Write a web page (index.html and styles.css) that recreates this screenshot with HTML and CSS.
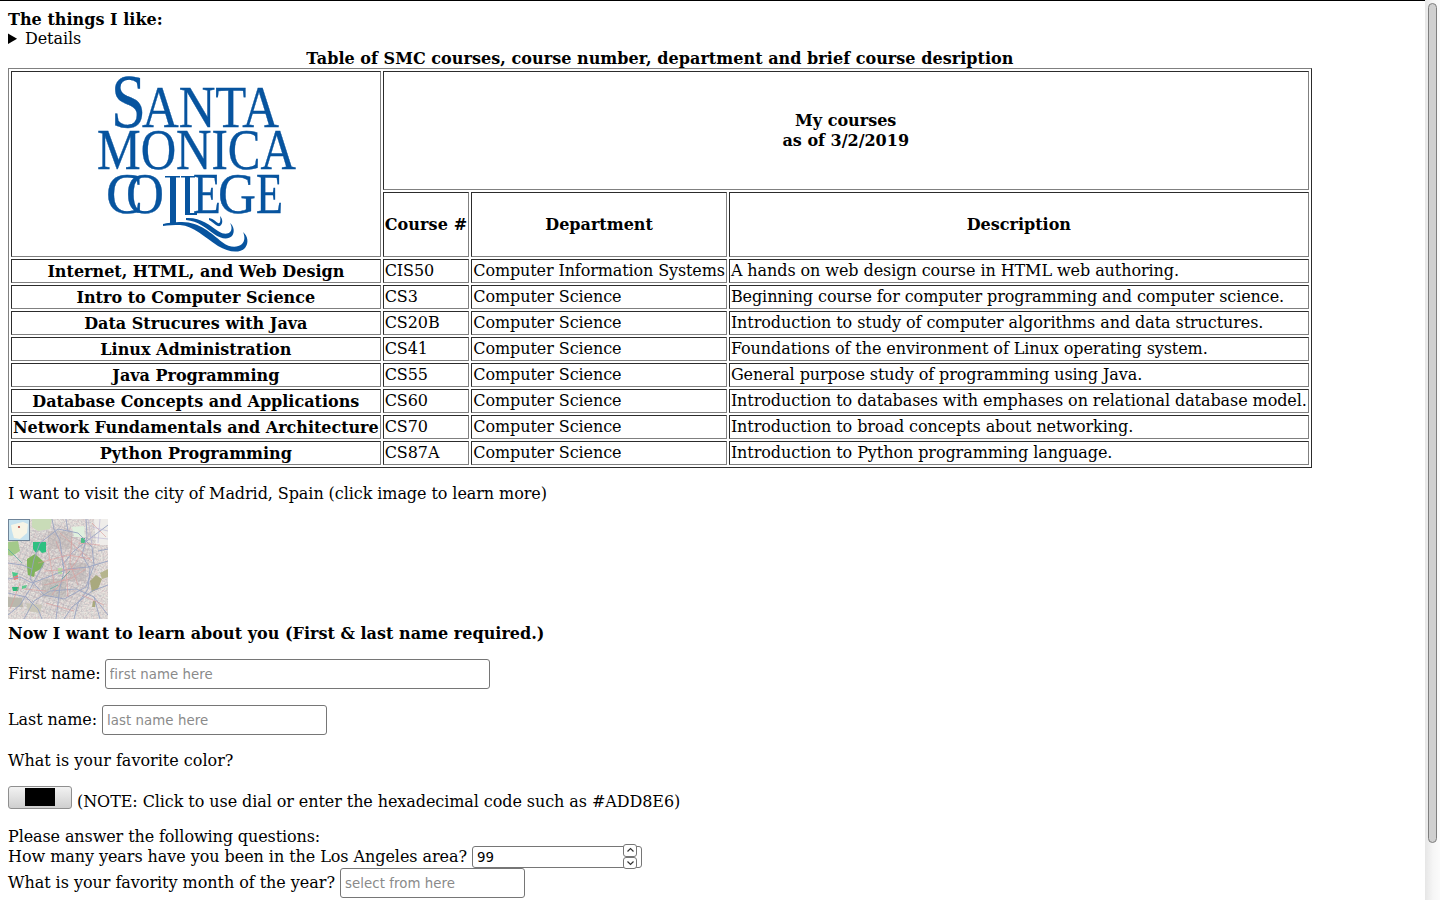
FILE: index.html
```html
<!DOCTYPE html>
<html lang="en">
<head>
<meta charset="utf-8">
<title>My courses</title>
<link rel="stylesheet" href="styles.css">
</head>
<body>
<div class="page">
  <div class="title"><strong>The things I like:</strong></div>
  <details><summary>Details</summary><p>Things</p></details>
  <table class="courses">
    <caption>Table of SMC courses, course number, department and brief course desription</caption>
    <tr class="row-top">
      <th rowspan="2" class="logo-cell">
        <svg class="logo" width="200" height="178" viewBox="0 0 200 178" role="img" aria-label="Santa Monica College logo">
          <g class="logo-ink">
            <text x="15" y="51" font-size="77" textLength="35" lengthAdjust="spacingAndGlyphs">S</text>
            <text x="46" y="51" font-size="60" textLength="137" lengthAdjust="spacingAndGlyphs">ANTA</text>
            <text x="1" y="93" font-size="56" textLength="199" lengthAdjust="spacingAndGlyphs">MONICA</text>
            <text x="10" y="137" font-size="56" textLength="37" lengthAdjust="spacingAndGlyphs">C</text>
            <text x="30" y="137" font-size="56" textLength="38" lengthAdjust="spacingAndGlyphs">O</text>
            <text x="97" y="137" font-size="56" textLength="28" lengthAdjust="spacingAndGlyphs">E</text>
            <text x="122" y="137" font-size="56" textLength="38" lengthAdjust="spacingAndGlyphs">G</text>
            <text x="160" y="137" font-size="56" textLength="27" lengthAdjust="spacingAndGlyphs">E</text>
          </g>
          <path class="logo-fill" d="M69 100 H84 V101.5 H80 V148 H74 V101.5 H69 Z"/>
          <path class="logo-fill" d="M85 100 H99 V101.5 H94 V137 L101 137 V139 L89 139 V101.5 H85 Z"/>
          <path class="logo-fill" d="M67 148 C70 147 78 146 86 146 C104 146 116 158 126 166 C134 172 141 172 146 168 C149 165 149 160 147 156 C152 160 153 167 149 172 C143 178 132 176 122 170 C108 161 98 150 84 149 C78 149 72 149 67 150 Z"/>
          <path class="logo-fill" d="M90 142 C104 141 114 149 122 155 C128 159 132 158 134 156 C136 154 136 150 134 147 C138 150 139 156 136 160 C132 164 125 163 118 158 C110 152 102 145 90 144 Z"/>
          <path class="logo-fill" d="M113 142 C118 143 120 146 122 147 C124 148 125 145 124 140 C127 143 127 148 124 150 C121 151 117 146 113 144 Z"/>
        </svg>
      </th>
      <th colspan="3">My courses<br>as of 3/2/2019</th>
    </tr>
    <tr class="row-head">
      <th class="head-course">Course #</th>
      <th>Department</th>
      <th>Description</th>
    </tr>
    <tr><th>Internet, HTML, and Web Design</th><td>CIS50</td><td class="tight-cell">Computer Information Systems</td><td>A hands on web design course in HTML web authoring.</td></tr>
    <tr><th>Intro to Computer Science</th><td>CS3</td><td>Computer Science</td><td>Beginning course for computer programming and computer science.</td></tr>
    <tr><th>Data Strucures with Java</th><td>CS20B</td><td>Computer Science</td><td>Introduction to study of computer algorithms and data structures.</td></tr>
    <tr><th>Linux Administration</th><td>CS41</td><td>Computer Science</td><td>Foundations of the environment of Linux operating system.</td></tr>
    <tr><th>Java Programming</th><td>CS55</td><td>Computer Science</td><td>General purpose study of programming using Java.</td></tr>
    <tr><th>Database Concepts and Applications</th><td>CS60</td><td>Computer Science</td><td>Introduction to databases with emphases on relational database model.</td></tr>
    <tr><th class="tight">Network Fundamentals and Architecture</th><td>CS70</td><td>Computer Science</td><td>Introduction to broad concepts about networking.</td></tr>
    <tr><th>Python Programming</th><td>CS87A</td><td>Computer Science</td><td>Introduction to Python programming language.</td></tr>
  </table>

  <p class="visit">I want to visit the city of Madrid, Spain (click image to learn more)</p>

  <svg class="map" width="100" height="100" viewBox="0 0 100 100" role="img" aria-label="Map of Madrid">
    <defs>
      <filter id="soft" x="0" y="0" width="100%" height="100%"><feGaussianBlur stdDeviation="0.5"/></filter>
      <filter id="grain" x="0" y="0" width="100%" height="100%">
        <feTurbulence type="fractalNoise" baseFrequency="0.6" numOctaves="2" seed="11"/>
        <feColorMatrix values="0 0 0 0 0.55  0 0 0 0 0.53  0 0 0 0 0.55  2.6 0 0 0 -0.85"/>
      </filter>
      <filter id="grain2" x="0" y="0" width="100%" height="100%">
        <feTurbulence type="fractalNoise" baseFrequency="0.42" numOctaves="2" seed="4"/>
        <feColorMatrix values="0 0 0 0 0.85  0 0 0 0 0.58  0 0 0 0 0.58  2.4 0 0 0 -1"/>
      </filter>
      <pattern id="streets" width="5" height="5" patternUnits="userSpaceOnUse" patternTransform="rotate(24)">
        <path d="M0 0 H5 M0 0 V5" stroke="#9c9aa4" stroke-width=".55" fill="none"/>
      </pattern>
      <pattern id="streets2" width="7" height="4" patternUnits="userSpaceOnUse" patternTransform="rotate(-38)">
        <path d="M0 0 H7 M0 0 V4" stroke="#b9a9aa" stroke-width=".5" fill="none"/>
      </pattern>
    </defs>
    <rect width="100" height="100" fill="#e7e5df"/>
    <g filter="url(#soft)">
      <rect width="100" height="100" filter="url(#grain)" opacity=".85"/>
      <rect width="100" height="100" filter="url(#grain2)" opacity=".45"/>
      <path d="M14 14 L50 4 L84 14 L92 44 L88 70 L70 92 L40 96 L14 84 L8 50 Z" fill="url(#streets)"/>
      <path d="M24 20 L60 10 L84 30 L84 66 L60 84 L30 78 L20 50 Z" fill="url(#streets2)"/>
      <path d="M24 0 L44 0 L42 10 L30 12 L24 8 Z" fill="#c9dcb8"/>
      <path d="M0 23 L10 22 L12 32 L4 37 L0 36 Z" fill="#a3c98a"/>
      <path d="M64 8 L76 7 L77 18 L66 18 Z" fill="#e0f0de"/>
      <path d="M86 0 L100 0 L100 26 L88 26 Z" fill="#efedea"/>
      <path d="M19 40 L27 35 L36 43 L35 48 L31 51 L27 53 L26 58 L20 56 L19 48 Z" fill="#7fb35c"/>
      <path d="M25 23 L38 23 L38 33 L34 34 L31 31 L28 34 L25 30 Z" fill="#2fc081"/>
      <path d="M73 19 L77 19 L77 24 L73 24 Z" fill="#4cbf86"/>
      <path d="M4 68 L11 68 L10 72 L5 72 Z" fill="#2fb878"/>
      <path d="M14 67 L19 66 L18 69 L14 70 Z" fill="#5fc98f"/>
      <path d="M4 53 L10 54 L9 57 L5 58 Z" fill="#4ec98c"/>
      <path d="M5 58 L10 56 L10 60 L6 61 Z" fill="#ea7d78"/>
      <path d="M50 49 L54 49 L54 55 L50 55 Z" fill="#b3e0a3"/>
      <path d="M82 62 L88 56 L94 60 L90 70 L84 73 Z" fill="#a9a97e"/>
      <path d="M92 54 L100 50 L100 58 L94 60 Z" fill="#b5b58d"/>
      <path d="M85 82 L88 82 L87 88 L84 88 Z" fill="#a9a97e"/>
      <path d="M0 78 L14 79 L15 88 L0 88 Z" fill="#b9b7ac"/>
      <path d="M18 84 L34 86 L32 94 L20 92 Z" fill="#c9c6b8"/>
      <path d="M60 44 L78 44 L78 62 L60 62 Z" fill="#b4aeac" opacity=".45"/>
      <path d="M34 60 L58 60 L58 78 L34 78 Z" fill="#b0aca8" opacity=".45"/>
      <path d="M40 12 L64 12 L64 30 L40 30 Z" fill="#b8b0ae" opacity=".45"/>
      <g fill="none" stroke="#97a3c2" stroke-width=".9">
        <path d="M44 0 L46 10 L52 22 L54 38 L56 52 L52 68 L50 84 L48 100"/>
        <path d="M0 60 L12 58 L24 64 L40 58 L60 50 L80 48 L100 42"/>
        <path d="M16 100 L26 82 L42 72 L68 70 L86 78 L100 96"/>
        <path d="M78 0 L79 18 L74 36 L82 50 L80 70 L70 84 L66 100"/>
        <path d="M32 24 L50 10 L70 14 L84 28 L86 46 L78 68 L56 80 L36 76 L22 60 L26 40 Z"/>
        <path d="M0 96 L12 86 L22 70 L36 44"/>
        <path d="M56 100 L64 88 L84 72 L100 66"/>
        <path d="M100 6 L84 18 L66 32 L54 46"/>
        <path d="M0 44 L14 46 L24 50"/>
        <path d="M0 74 L18 78 L30 90 L34 100"/>
        <path d="M58 0 L60 12 M90 32 L100 30 M92 100 L86 78"/>
      </g>
      <g fill="none" stroke="#dc9a98" stroke-width=".6">
        <path d="M30 44 L60 36 L82 40"/>
        <path d="M36 66 L62 60 L78 50"/>
        <path d="M48 22 L58 48 L60 78"/>
        <path d="M64 18 L62 44 L70 66"/>
        <path d="M40 30 L46 64"/>
        <path d="M36 52 L72 50"/>
        <path d="M44 76 L74 34"/>
        <path d="M38 84 L66 92 M16 70 L38 72 M70 24 L92 26 M52 14 L84 42"/>
        <path d="M2 90 L12 64 M74 76 L96 86 M84 4 L98 18"/>
      </g>
      <g fill="none" stroke="#b7b4d4" stroke-width=".6">
        <path d="M80 0 L84 26 M92 0 L90 24 M84 8 L100 12 M82 18 L100 20"/>
      </g>
      <g fill="none" stroke="#55a8a0" stroke-width=".7">
        <path d="M0 30 L8 38 L14 44 M54 60 L62 52 M42 70 L50 66"/>
      </g>
    </g>
    <rect x=".5" y=".5" width="21" height="21" fill="#c6e2ee" stroke="#6f8498"/>
    <path d="M3 6 L15 3 L20 5 L19 14 L12 20 L6 19 L4 12 Z" fill="#f7f5e6"/>
    <circle cx="11" cy="8" r="1.1" fill="#b64a44"/>
  </svg>

  <div class="learn"><strong>Now I want to learn about you (First &amp; last name required.)</strong></div>

  <form class="survey">
    <p class="field"><label for="first" class="label-first">First name:</label> <input id="first" class="box box-first" type="text" placeholder="first name here"></p>
    <p class="field"><label for="last">Last name:</label> <input id="last" class="box box-last" type="text" placeholder="last name here"></p>
    <p class="fav">What is your favorite color?</p>
    <p class="color-line"><span class="color-well"><span class="color-swatch"></span></span> (NOTE: Click to use dial or enter the hexadecimal code such as #ADD8E6)</p>
    <div class="questions">
      <div class="q-intro">Please answer the following questions:</div>
      <div class="q-number"><label for="years">How many years have you been in the Los Angeles area?</label> <span class="number-wrap"><input id="years" class="box box-number" type="text" value="99"><span class="spin"><span class="spin-btn"><svg width="9" height="6" viewBox="0 0 9 6"><path d="M1.5 4.5 L4.5 1.5 L7.5 4.5" fill="none" stroke="#333" stroke-width="1.2"/></svg></span><span class="spin-btn"><svg width="9" height="6" viewBox="0 0 9 6"><path d="M1.5 1.5 L4.5 4.5 L7.5 1.5" fill="none" stroke="#333" stroke-width="1.2"/></svg></span></span></span></div>
      <div class="q-month"><label for="month">What is your favority month of the year?</label> <input id="month" class="box box-month" type="text" placeholder="select from here"></div>
    </div>
  </form>
</div>
<div class="scrollbar"><div class="thumb"></div></div>
</body>
</html>
```

FILE: styles.css
```css
html {
  border-top: 1px solid #000;
  height: 100%;
  box-sizing: border-box;
  overflow: hidden;
  background: #fff;
}
body {
  margin: 0;
  height: 100%;
  font-family: "DejaVu Serif", serif;
  font-size: 16px;
  line-height: 19px;
  letter-spacing: -0.08px;
  color: #000;
  background: #fff;
}
strong { letter-spacing: 0.03px; }
.page {
  width: 1409px;
  padding: 8px;
}
.title { padding-top: 1px; }
p { margin: 16px 0; }
.visit { letter-spacing: -0.075px; }
.fav { letter-spacing: 0; }
summary { cursor: pointer; }
details p { display: none; }

.courses {
  border: 1px outset grey;
  border-spacing: 2px;
  border-collapse: separate;
}
.courses caption {
  font-weight: bold;
  text-align: center;
  padding-top: 1px;
  letter-spacing: 0.04px;
}
.courses th, .courses td {
  border: 1px inset grey;
  height: 24px;
  box-sizing: border-box;
}
.courses td { padding: 1px 1px 2px; text-align: left; }
.courses th { padding: 2px 1px 1px; text-align: center; letter-spacing: 0; }
.courses .tight { letter-spacing: -0.03px; }
.courses .tight-cell { letter-spacing: -0.115px; }
.courses .row-top th { height: 119px; padding: 1px; line-height: 20px; }
.courses .row-head th { height: 65px; padding: 1px 1px 2px; }
.courses .row-head .head-course { letter-spacing: 0.12px; }
.courses .row-top .logo-cell { height: 186px; padding: 1px; vertical-align: top; }

.logo { display: block; margin: 3px auto 0; }
.logo-ink {
  font-family: "Liberation Serif", serif;
  font-weight: normal;
  fill: #07549f;
  stroke: #07549f;
  stroke-width: 0.35px;
  letter-spacing: 0;
}
.logo-fill { fill: #07549f; }

.map { display: block; margin-bottom: 5px; }
.learn { letter-spacing: 0; }
.learn strong { letter-spacing: 0.02px; }

.box {
  box-sizing: border-box;
  font-family: "DejaVu Sans", sans-serif;
  font-size: 13.333px;
  letter-spacing: 0.06px;
  padding: 1px 4px;
  border: 1px solid #767676;
  border-radius: 3px;
  background: #fff;
  color: #000;
  vertical-align: baseline;
}
.box::placeholder { color: #8a8a8a; }
.box-first { width: 385px; height: 30px; }
.box-last { width: 225px; height: 30px; }
.box-month { width: 185px; height: 30px; }
.box-number { width: 170px; height: 22px; }
.label-first { margin-right: -1px; }

.color-well {
  display: inline-block;
  box-sizing: border-box;
  width: 64px;
  height: 23px;
  border: 1px solid #8f8f8f;
  border-radius: 3px;
  background: linear-gradient(#f2f2f2, #cfcfcf);
  padding: 1px 16px 2px;
  vertical-align: -2px;
}
.color-swatch { display: block; height: 18px; background: #000; }

.q-intro { letter-spacing: -0.105px; }
.q-number { letter-spacing: -0.06px; }
.q-month { letter-spacing: -0.04px; }
.number-wrap { position: relative; display: inline-block; }
.spin {
  position: absolute;
  right: 5px;
  top: -2px;
  width: 14px;
  height: 25px;
  display: flex;
  flex-direction: column;
}
.spin-btn {
  box-sizing: border-box;
  flex: 1;
  border: 1px solid #767676;
  border-radius: 3px;
  background: #fff;
  display: flex;
  align-items: center;
  justify-content: center;
}

.scrollbar {
  position: fixed;
  top: 0;
  right: 0;
  bottom: 0;
  width: 15px;
  background: linear-gradient(90deg, #e6e6e6, #f6f6f6 55%, #fbfbfb);
  box-sizing: border-box;
  padding: 3px 3px 0;
}
.thumb {
  box-sizing: border-box;
  height: 840px;
  border: 1px solid #7e7e7e;
  border-radius: 5px;
  background: #cfcfcf;
}
```
